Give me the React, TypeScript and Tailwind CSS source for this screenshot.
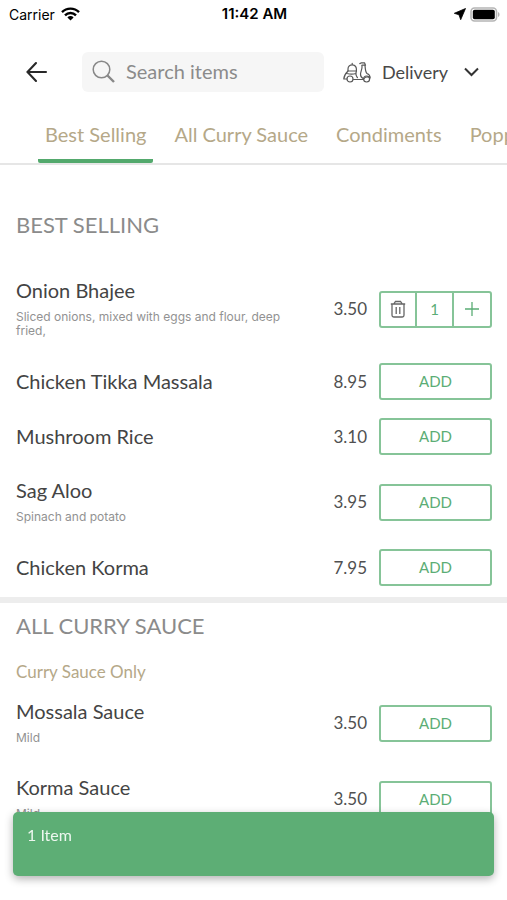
import React from "react";

type Item = { name: string; note?: string; price: string; quantity?: number };

const bestSelling: Item[] = [
  { name: "Onion Bhajee", note: "Sliced onions, mixed with eggs and flour, deep fried,", price: "3.50", quantity: 1 },
  { name: "Chicken Tikka Massala", price: "8.95" },
  { name: "Mushroom Rice", price: "3.10" },
  { name: "Sag Aloo", note: "Spinach and potato", price: "3.95" },
  { name: "Chicken Korma", price: "7.95" },
];

const currySauces: Item[] = [
  { name: "Mossala Sauce", note: "Mild", price: "3.50" },
  { name: "Korma Sauce", note: "Mild", price: "3.50" },
];

const tabs = ["Best Selling", "All Curry Sauce", "Condiments", "Popp"];

function StatusBar() {
  return (
    <div className="grid h-7 grid-cols-3 items-center pr-[7px] pl-[9px] font-['Inter',sans-serif] text-[14px] text-black">
      <div className="flex items-center gap-[6px]">
        <span>Carrier</span>
        <svg width="19" height="14" viewBox="0 0 19 14" fill="none" stroke="#000" strokeWidth="2.4" aria-hidden="true">
          <path d="M1 5.2a12 12 0 0 1 17 0" />
          <path d="M4 8.3a7.8 7.8 0 0 1 11 0" />
          <path d="M9.500 13.500 6.400 10.400a4.400 4.400 0 0 1 6.200 0z" fill="#000" stroke="none" />
        </svg>
      </div>
      <span className="text-center text-[15px] font-semibold whitespace-nowrap">11:42 AM</span>
      <div className="flex items-center justify-end gap-1">
        <svg width="12" height="12" viewBox="0 0 12 12" aria-hidden="true">
          <path d="M11.500.5.3 5.300 5 6.800 6.700 11.700z" fill="#000" stroke="#000" strokeWidth=".8" strokeLinejoin="round" />
        </svg>
        <svg width="30" height="15" viewBox="0 0 30 15" aria-hidden="true">
          <rect x="1" y="1" width="25.500" height="13" rx="3.500" fill="#fff" stroke="#b5b5b5" strokeWidth="1.600" />
          <rect x="2.800" y="2.800" width="22" height="9.400" rx="1.800" fill="#000" />
          <path d="M28 5v5c2-.8 2-4.200 0-5z" fill="#b5b5b5" />
        </svg>
      </div>
    </div>
  );
}

function ScooterIcon() {
  return (
    <svg width="28" height="21" viewBox="0 0 28 21" fill="none" stroke="#585858" strokeWidth="1.200" strokeLinejoin="round" strokeLinecap="round" aria-hidden="true">
      <path d="M5 9V7a4.200 4.200 0 0 1 8.400 0v2zM9.200 2.500V1.300" />
      <path d="M5 9C3 11 1 14 .8 17h3M13.400 9c-.8 2.500-.3 5 1 6.500M10.500 17.500H20.500M4 11.500c3 .8 6 .8 9 0M19 3.500c.5 3-1.300 6-1.500 8.500-.1 2 .8 3.500 2.500 4.500" />
      <circle cx="7" cy="17" r="3" />
      <circle cx="23.600" cy="17" r="3" />
      <path d="M16.800 1.600 18.500.8h3l1 2.400h-3.500M22 3.200c.3 3 .2 6.500 2 8.300 2 .8 3.200 2.500 3.200 4.500-2-1.500-5-1.500-6.500 1" />
    </svg>
  );
}

function Header() {
  return (
    <header className="mt-6 flex h-10 items-center pr-7">
      <button aria-label="Back" className="ml-[26px] flex w-[22px] shrink-0">
        <svg width="22" height="22" viewBox="0 0 22 22" fill="none" stroke="#282828" strokeWidth="2.100" strokeLinecap="round" aria-hidden="true">
          <path d="M20 11H1.500M10 2 1.500 11l8.500 9" />
        </svg>
      </button>
      <label className="ml-[34px] flex h-10 min-w-0 flex-1 items-center gap-[10px] rounded-md bg-[#f6f6f6] pl-[10px]">
        <svg width="24" height="24" viewBox="0 0 24 24" fill="none" stroke="#888" className="shrink-0" aria-hidden="true">
          <circle cx="9.500" cy="9.500" r="8.300" strokeWidth="1.500" />
          <path d="m15.500 15.500 6.500 6.500" strokeWidth="2.400" />
        </svg>
        <input aria-label="Search items" placeholder="Search items" className="w-full min-w-0 bg-transparent pb-[2px] text-[20px] outline-none placeholder:text-[#8b8b8b]" />
      </label>
      <button className="ml-[19px] flex shrink-0 items-center text-[18px] text-[#484848]">
        <ScooterIcon />
        <span className="ml-[11px]">Delivery</span>
        <svg width="15" height="10" viewBox="0 0 15 10" fill="none" stroke="#333" strokeWidth="2" className="ml-4" aria-hidden="true">
          <path d="m1 1.500 6.500 6.500L14 1.500" />
        </svg>
      </button>
    </header>
  );
}

function Tabs() {
  return (
    <nav className="mt-[15px] overflow-hidden border-b-2 border-[#e6e6e6] pl-[38px]">
      <div className="flex gap-[14px]">
        {tabs.map((tab, i) => (
          <a
            key={tab}
            href="#menu"
            className={`flex h-14 shrink-0 items-center border-b-4 px-[7px] pt-[2px] text-[20px] text-[#b5a888] ${i === 0 ? "rounded-b-xs border-[#53a96d]" : "border-transparent"}`}
          >
            {tab}
          </a>
        ))}
      </div>
    </nav>
  );
}

function TrashIcon() {
  return (
    <svg width="16" height="18" viewBox="0 0 16 18" fill="none" stroke="#666" strokeWidth="1.300" aria-hidden="true">
      <path d="M.8 4h14.400M4 3.700 5.500 1.500h5L12 3.700M2 4.500v10.700C2 16.500 2.600 17 3.700 17h8.600c1.100 0 1.700-.5 1.700-1.800V4.500M6.200 7v7M9.800 7v7" />
    </svg>
  );
}

function ItemRow({ item }: { item: Item }) {
  return (
    <li className="flex min-h-[55px] items-center py-2 pr-[15px] pl-4">
      <div className="min-w-0 flex-1 pt-[6px] pb-2">
        <h3 className="text-[20px] leading-6 text-[#444]">{item.name}</h3>
        {item.note && <p className="mt-2 font-['Inter',sans-serif] text-[12px] leading-[14px] text-[#929292]">{item.note}</p>}
      </div>
      <span className="ml-4 w-14 text-right text-[17px] text-[#505050]">{item.price}</span>
      {item.quantity ? (
        <div className="ml-3 grid h-[37px] w-[113px] shrink-0 grid-cols-3 divide-x-2 divide-[#86c498] rounded-[3px] border-2 border-[#86c498] text-[#5bad75]">
          <button aria-label={`Remove ${item.name}`} className="flex items-center justify-center"><TrashIcon /></button>
          <span className="flex items-center justify-center text-[15px]">{item.quantity}</span>
          <button aria-label={`Add another ${item.name}`} className="flex items-center justify-center">
            <svg width="14" height="14" viewBox="0 0 14 14" fill="none" stroke="currentColor" strokeWidth="1.300" aria-hidden="true">
              <path d="M7 0v14M0 7h14" />
            </svg>
          </button>
        </div>
      ) : (
        <button aria-label={`Add ${item.name}`} className="ml-3 h-[37px] w-[113px] shrink-0 rounded-[3px] border-2 border-[#86c498] text-[15px] text-[#5bad75]">
          ADD
        </button>
      )}
    </li>
  );
}

export default function App() {
  return (
    <div className="min-h-screen bg-white font-['Lato',sans-serif]">
      <StatusBar />
      <Header />
      <Tabs />
      <main id="menu">
        <section className="pt-12 pb-[2px]">
          <h2 className="mb-[27px] px-4 text-[22px] leading-6 text-[#8b8b8b]">BEST SELLING</h2>
          <ul>{bestSelling.map((item) => <ItemRow key={item.name} item={item} />)}</ul>
        </section>
        <section className="border-t-6 border-[#ededed] pt-[11px]">
          <h2 className="px-4 text-[22px] leading-6 text-[#8b8b8b]">ALL CURRY SAUCE</h2>
          <p className="mt-[22px] mb-px px-4 text-[17px] leading-6 text-[#b5a888]">Curry Sauce Only</p>
          <ul>{currySauces.map((item) => <ItemRow key={item.name} item={item} />)}</ul>
        </section>
      </main>
      <button className="fixed inset-x-[13px] bottom-6 flex h-16 items-start rounded-[5px] bg-[#5dae75] px-[14px] pt-[11px] text-[16px] leading-6 text-[#edf7ef] shadow-[0_3px_8px_rgba(0,0,0,0.3)]">
        1 Item
      </button>
    </div>
  );
}
